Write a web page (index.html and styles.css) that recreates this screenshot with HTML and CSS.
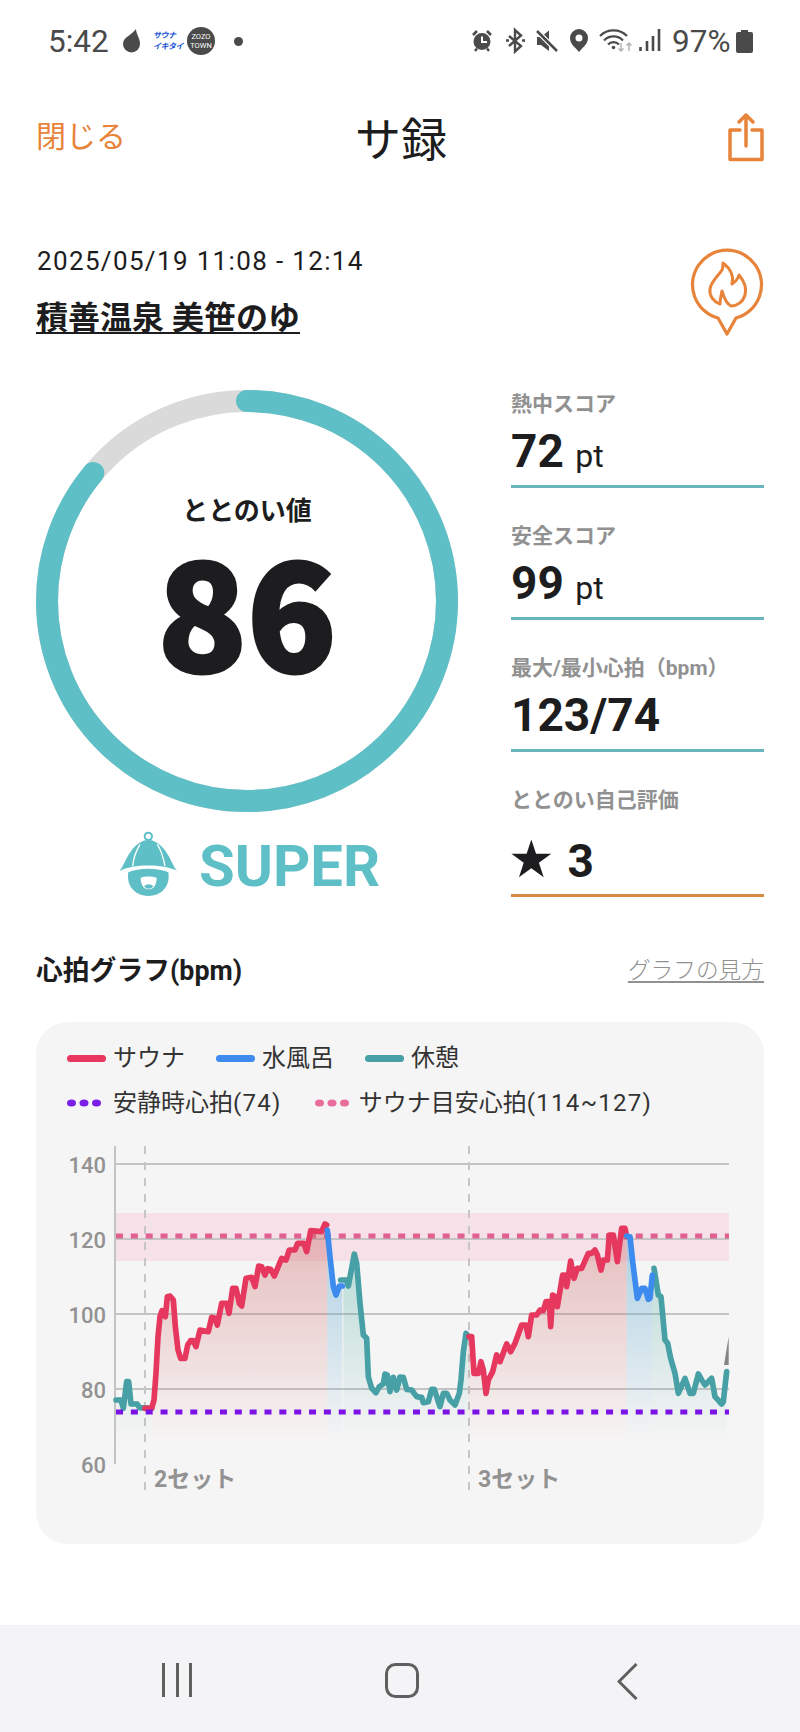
FILE: index.html
```html
<!DOCTYPE html>
<html lang="ja">
<head>
<meta charset="utf-8">
<title>サ録</title>
<link rel="stylesheet" href="styles.css">
</head>
<body>
<div class="page">
  <div class="status">
    <div class="status-left">
      <span class="clock">5:42</span>
      <svg class="st-drop" width="17" height="24" viewBox="123 31 17 24"><path d="M136 31C136 36 140 40 140 46A8.500 8.500 0 0 1 123 46C123 39 131 38 136 31Z"/></svg>
      <span class="st-logo"><span>サウナ</span><span>イキタイ</span></span>
      <span class="st-zozo"><span>ZOZO</span><span>TOWN</span></span>
      <span class="st-dot"></span>
    </div>
    <div class="status-right">
      <svg class="st-icons" width="190" height="28" viewBox="472 28 190 28">
        <circle cx="483" cy="42.500" r="8.500" fill="#4a4a4a"/>
        <path d="M483 37.500V43H488" fill="none" stroke="#fff" stroke-width="2"/>
        <path d="M474 36L478 32M492 36L488 32M476 52L478 49.500M490 52L488 49.500" fill="none" stroke="#4a4a4a" stroke-width="2.500"/>
        <path d="M510 37L522 47L516 52.500V31L522 36.500L510 47" fill="none" stroke="#4a4a4a" stroke-width="2.400"/>
        <path d="M507 41.500H510M523 41.500H526" stroke="#4a4a4a" stroke-width="2.400"/>
        <path d="M538 38H542L550 31.500V52L542 46H538Z" fill="#4a4a4a"/>
        <path d="M538 32L558 52" stroke="#fff" stroke-width="5"/>
        <path d="M538 32L558 52" stroke="#4a4a4a" stroke-width="2.500"/>
        <path d="M580 30A9 9 0 0 1 589 39C589 45 584 48 580 53C576 48 571 45 571 39A9 9 0 0 1 580 30Z" fill="#4a4a4a"/>
        <circle cx="580" cy="39" r="3.500" fill="#fff"/>
        <path d="M601 37A19 19 0 0 1 628 37M605 41.500A13 13 0 0 1 624 41.500M609 45.500A7.500 7.500 0 0 1 620 45.500" fill="none" stroke="#4a4a4a" stroke-width="2.200"/>
        <circle cx="614.500" cy="48.500" r="1.800" fill="#4a4a4a"/>
        <path d="M622 44V52M619.500 49.500L622 52L624.500 49.500M630 52V44M627.500 46.500L630 44L632.500 46.500" fill="none" stroke="#b5b5b5" stroke-width="1.500"/>
        <path d="M641.500 52V48M648 52V42M654 52V37M660 52V30" stroke="#4a4a4a" stroke-width="2.600"/>
      </svg>
      <span class="battery-text">97%</span>
      <svg class="st-battery" width="17" height="23" viewBox="0 0 17 23"><path d="M5 0H12V2H15A2 2 0 0 1 17 4V21A2 2 0 0 1 15 23H2A2 2 0 0 1 0 21V4A2 2 0 0 1 2 2H5Z"/></svg>
    </div>
  </div>

  <header class="topbar">
    <span class="close">閉じる</span>
    <h1 class="title">サ録</h1>
    <svg class="share" width="40" height="54" viewBox="727 110 40 54"><path d="M741 130H731V159.500H763V130H753M747 146V115M740 122L747 115L754 122" fill="none" stroke="#e8833a" stroke-width="3.500" stroke-linejoin="round" stroke-linecap="round"/></svg>
  </header>

  <section class="info">
    <div class="info-text">
      <div class="date">2025/05/19 11:08 - 12:14</div>
      <div class="venue">積善温泉 美笹のゆ</div>
    </div>
    <svg class="badge" width="76" height="90" viewBox="689 248 76 90">
      <path d="M718 318A34.500 34.500 0 1 1 736 318L727 334Z" fill="none" stroke="#e8833a" stroke-width="3.200" stroke-linejoin="round"/>
      <path d="M723 263C731 269 734 277 732 284C735 282 738 279 739 275C744 281 747 288 745 295C743 302 737 306 731 306C727 304 724 298 722 291C721 296 720 300 720 304C714 302 709 296 710 289C711 281 719 275 722 270C723 268 723 265 723 263Z" fill="none" stroke="#e8833a" stroke-width="3" stroke-linejoin="round"/>
    </svg>
  </section>

  <section class="main">
    <div class="score">
      <div class="gauge">
        <svg class="gauge-ring" width="422" height="422" viewBox="0 0 422 422">
          <circle cx="211" cy="211" r="200" fill="none" stroke="#dadada" stroke-width="22"/>
          <circle cx="211" cy="211" r="200" fill="none" stroke="#5fbfc6" stroke-width="22" stroke-linecap="round" stroke-dasharray="1081 1257" transform="rotate(-90 211 211)"/>
        </svg>
        <div class="gauge-center">
          <div class="gauge-label">ととのい値</div>
          <div class="gauge-value">86</div>
        </div>
      </div>
      <div class="rank">
        <svg class="rank-icon" width="58" height="65" viewBox="58 60 172 195">
          <circle cx="145" cy="76" r="11" fill="none" stroke="#5fbfc6" stroke-width="6"/>
          <path d="M58 180C75 165 85 105 135 88H155C205 105 215 165 232 180C190 158 100 158 58 180Z" fill="#5fbfc6"/>
          <path d="M120 100C108 120 100 145 98 165M172 100C185 120 190 140 195 165" fill="none" stroke="#fff" stroke-width="4"/>
          <path d="M85 184C115 170 175 170 205 184C212 230 180 255 145 255C110 255 78 230 85 184Z" fill="#5fbfc6"/>
          <path d="M122 200C135 195 155 195 170 200C170 225 158 235 146 235C134 235 122 225 122 200Z" fill="#fff"/>
          <path d="M132 226C140 218 152 218 160 226C152 236 140 236 132 226Z" fill="#5fbfc6"/>
        </svg>
        <span class="rank-text">SUPER</span>
      </div>
    </div>
    <div class="stats">
      <div class="stat">
        <div class="stat-label">熱中スコア</div>
        <div class="stat-value">72 <span class="unit">pt</span></div>
      </div>
      <div class="stat">
        <div class="stat-label">安全スコア</div>
        <div class="stat-value">99 <span class="unit">pt</span></div>
      </div>
      <div class="stat">
        <div class="stat-label">最大/最小心拍（bpm）</div>
        <div class="stat-value">123/74</div>
      </div>
      <div class="stat stat-self">
        <div class="stat-label">ととのい自己評価</div>
        <div class="stat-value"><span class="star">★</span> 3</div>
      </div>
    </div>
  </section>

  <div class="graph-head">
    <h2 class="graph-title">心拍グラフ(bpm)</h2>
    <span class="graph-link">グラフの見方</span>
  </div>

  <section class="card">
    <div class="legend">
      <div class="legend-row legend-row-lines">
        <span class="legend-item"><i class="swatch swatch-sauna"></i>サウナ</span>
        <span class="legend-item"><i class="swatch swatch-water"></i>水風呂</span>
        <span class="legend-item"><i class="swatch swatch-rest"></i>休憩</span>
      </div>
      <div class="legend-row legend-row-dots">
        <span class="legend-item"><svg class="dots" width="34" height="8" viewBox="0 0 34 8" fill="#7b1fe8"><ellipse cx="4.500" cy="4" rx="4.500" ry="3.500"/><ellipse cx="17" cy="4" rx="4.500" ry="3.500"/><ellipse cx="29.500" cy="4" rx="4.500" ry="3.500"/></svg>安静時心拍<span class="num">(74)</span></span>
        <span class="legend-item"><svg class="dots dots-pink" width="34" height="8" viewBox="0 0 34 8" fill="#e86d9c"><ellipse cx="4.500" cy="4" rx="4.500" ry="3.500"/><ellipse cx="17" cy="4" rx="4.500" ry="3.500"/><ellipse cx="29.500" cy="4" rx="4.500" ry="3.500"/></svg>サウナ目安心拍<span class="num">(114~127)</span></span>
      </div>
    </div>
    <svg class="chart" width="727" height="370" viewBox="36 1130 727 370">
      <defs>
        <linearGradient id="gr" gradientUnits="userSpaceOnUse" x1="0" y1="130" x2="0" y2="790"><stop offset="0" stop-color="#cc6a6a" stop-opacity=".42"/><stop offset="1" stop-color="#cc6a6a" stop-opacity="0"/></linearGradient>
        <linearGradient id="gb" gradientUnits="userSpaceOnUse" x1="0" y1="130" x2="0" y2="790"><stop offset="0" stop-color="#5aa8d0" stop-opacity=".5"/><stop offset="1" stop-color="#5aa8d0" stop-opacity="0"/></linearGradient>
        <linearGradient id="gt" gradientUnits="userSpaceOnUse" x1="0" y1="130" x2="0" y2="790"><stop offset="0" stop-color="#3fa69a" stop-opacity=".38"/><stop offset="1" stop-color="#3fa69a" stop-opacity="0"/></linearGradient>
      </defs>
      <rect class="band" x="115" y="1213" width="614" height="48"/>
      <path class="grid" d="M115 1164H729M115 1239H729M115 1314H729M115 1389H729"/>
      <path class="axis" d="M115 1146V1464"/>
      <path class="setline" d="M145 1146V1490M469 1146V1490"/>
      <path class="dot-pink" d="M116 1236H729"/>
      <g class="axis-label">
        <text x="106" y="1173">140</text>
        <text x="106" y="1248">120</text>
        <text x="106" y="1323">100</text>
        <text x="106" y="1398">80</text>
        <text x="106" y="1473">60</text>
      </g>
      <text class="set-label" x="154" y="1487">2セット</text>
      <text class="set-label" x="478" y="1487">3セット</text>

      <g transform="translate(20 1180) scale(.33333)">
        <polygon fill="url(#gt)" points="288,790 288,660 303,660 310,685 320,605 326,605 333,672 352,672 358,683 395,685 395,790"/>
        <polygon fill="url(#gr)" points="395,790 395,685 402,660 408,580 414,470 420,410 426,392 436,410 442,350 450,348 460,360 466,440 474,510 482,535 495,535 503,495 512,482 520,482 528,500 540,450 565,455 575,412 585,415 592,435 605,370 620,370 627,400 638,325 648,325 658,370 665,378 678,295 695,292 705,320 716,258 725,260 735,285 743,266 752,268 763,288 785,235 798,240 808,210 825,210 833,190 852,190 860,215 872,152 905,155 915,132 922,135 922,790"/>
        <polygon fill="url(#gb)" points="922,790 922,150 930,230 940,320 948,345 958,318 967,318 967,790"/>
        <polygon fill="url(#gt)" points="970,790 970,300 980,300 985,318 1003,222 1010,250 1020,370 1030,465 1040,475 1045,590 1055,625 1068,638 1078,620 1090,612 1095,582 1102,585 1110,635 1120,592 1130,630 1140,592 1140,790"/>
        <polyline class="ln ln-rest" points="288,660 303,660 310,685 320,605 326,605 333,672 352,672 358,683 395,685"/>
        <polyline class="ln ln-sauna" points="375,685 395,685 402,660 408,580 414,470 420,410 426,392 436,410 442,350 450,348 460,360 466,440 474,510 482,535 495,535 503,495 512,482 520,482 528,500 540,450 565,455 575,412 585,415 592,435 605,370 620,370 627,400 638,325 648,325 658,370 665,378 678,295 695,292 705,320 716,258 725,260 735,285 743,266 752,268 763,288 785,235 798,240 808,210 825,210 833,190 852,190 860,215 872,152 905,155 915,132 920,135"/>
        <polyline class="ln ln-rest" points="962,300 980,300 985,318 1003,222 1010,250 1020,370 1030,465 1040,475 1045,590 1055,625 1068,638 1078,620 1090,612 1095,582 1102,585 1110,635 1120,592 1130,630 1140,592"/>
        <polyline class="ln ln-water" points="922,150 930,230 940,320 948,345 958,318 967,318"/>
      </g>
      <g transform="translate(400 1180) scale(.33333)">
        <polygon fill="url(#gt)" points="0,790 0,592 10,592 20,628 35,630 50,650 65,652 70,668 85,665 95,628 103,628 120,680 130,640 140,640 150,660 165,675 178,640 183,600 190,515 198,460 205,470 205,790"/>
        <polygon fill="url(#gr)" points="205,790 205,470 215,470 222,580 235,580 243,545 250,570 258,640 265,600 278,575 290,525 300,545 320,492 332,515 345,490 365,435 378,435 385,470 395,405 410,405 420,390 430,392 438,365 448,365 452,440 458,345 465,350 472,380 488,285 495,285 500,320 512,243 522,295 532,265 545,265 565,220 575,220 585,210 592,225 603,270 610,240 622,240 628,165 640,165 652,245 665,145 675,145 680,170 680,790"/>
        <polygon fill="url(#gb)" points="680,790 680,168 690,170 698,245 712,355 725,325 735,325 745,358 750,355 757,285 757,790"/>
        <polygon fill="url(#gt)" points="757,790 757,285 762,265 775,345 783,350 795,480 803,490 812,535 825,580 835,640 855,595 870,640 880,640 895,582 905,600 915,615 935,595 945,650 965,672 970,665 980,575 980,790"/>
        <polyline class="ln ln-rest" points="0,592 10,592 20,628 35,630 50,650 65,652 70,668 85,665 95,628 103,628 120,680 130,640 140,640 150,660 165,675 178,640 183,600 190,515 198,460 205,470"/>
        <polyline class="ln ln-sauna" points="207,470 215,470 222,580 235,580 243,545 250,570 258,640 265,600 278,575 290,525 300,545 320,492 332,515 345,490 365,435 378,435 385,470 395,405 410,405 420,390 430,392 438,365 448,365 452,440 458,345 465,350 472,380 488,285 495,285 500,320 512,243 522,295 532,265 545,265 565,220 575,220 585,210 592,225 603,270 610,240 622,240 628,165 640,165 652,245 665,145 675,145 680,170"/>
        <polyline class="ln ln-rest" points="762,265 775,345 783,350 795,480 803,490 812,535 825,580 835,640 855,595 870,640 880,640 895,582 905,600 915,615 935,595 945,650 965,672 970,665 980,575"/>
        <polyline class="ln ln-water" points="680,168 690,170 698,245 712,355 725,325 735,325 745,358 750,355 757,285"/>
        <polygon fill="#858585" points="972,555 986,555 986,470"/>
      </g>
      <path class="dot-purple" d="M116 1412H729"/>
    </svg>
  </section>

  <nav class="navbar">
    <svg width="30" height="34" viewBox="0 0 30 34" class="nav-icon"><path d="M1.500 0V34M15.500 0V34M28.500 0V34"/></svg>
    <svg width="35" height="35" viewBox="0 0 35 35" class="nav-icon"><rect x="1.500" y="1.500" width="31" height="32" rx="9"/></svg>
    <svg width="21" height="37" viewBox="0 0 21 37" class="nav-icon"><path d="M19.500 1L2 18.500L19.500 36" stroke-linejoin="miter"/></svg>
  </nav>
</div>
</body>
</html>
```

FILE: styles.css
```css
* { box-sizing: border-box; }
html, body { margin: 0; padding: 0; background: #fff; }
body { font-family: Roboto, "Noto Sans CJK JP", sans-serif; color: #1d1d20; }
h1, h2 { margin: 0; font-weight: inherit; font-size: inherit; }

.page { width: 800px; height: 1732px; display: flex; flex-direction: column; overflow: hidden; }

.status { height: 82px; flex: none; display: flex; justify-content: space-between; align-items: center; padding: 0 47px 0 48px; color: #4a4a4a; }
.status-left, .status-right { display: flex; align-items: center; }
.clock { font-size: 31.500px; width: 59px; padding-top: 1px; white-space: nowrap; }
.st-drop { margin-left: 16px; fill: #4a4a4a; }
.st-logo { margin-left: 13px; width: 29px; display: flex; flex-direction: column; font-size: 8px; line-height: 11px; font-weight: 700; font-style: italic; letter-spacing: -.5px; color: #1a55d8; white-space: nowrap; }
.st-zozo { margin-left: 5px; width: 28px; height: 28px; border-radius: 50%; background: #4a4a4a; color: #fff; display: flex; flex-direction: column; align-items: center; justify-content: center; font-size: 7.500px; line-height: 9px; }
.st-dot { margin-left: 19px; width: 9px; height: 9px; border-radius: 50%; background: #4a4a4a; }
.st-icons { margin-right: 11px; }
.battery-text { font-size: 31.500px; width: 59px; padding-top: 1px; white-space: nowrap; }
.st-battery { margin-left: 5px; fill: #4a4a4a; }

.topbar { height: 110px; flex: none; display: grid; grid-template-columns: 1fr auto 1fr; align-items: center; padding: 0 34px 0 36px; }
.close { font-size: 30px; line-height: 40px; color: #e8833a; }
.title { font-size: 46px; line-height: 56px; color: #1d1d20; padding-top: 5px; }
.share { justify-self: end; }

.info { display: flex; justify-content: space-between; align-items: flex-start; margin-top: 54px; padding: 0 35px 0 37px; height: 90px; }
.date { font-size: 26px; line-height: 30px; letter-spacing: 1.350px; }
.venue { font-size: 32px; line-height: 40px; margin-top: 22px; margin-left: -1px; font-weight: 700; text-decoration: underline; text-decoration-thickness: 2px; text-underline-offset: 3px; }
.badge { margin-top: 2px; }

.main { display: flex; justify-content: space-between; margin-top: 53px; padding: 0 36px; height: 509px; }
.score { width: 422px; display: flex; flex-direction: column; padding-top: 1px; }
.gauge { display: grid; width: 422px; height: 422px; }
.gauge-ring, .gauge-center { grid-area: 1 / 1; }
.gauge-center { display: flex; flex-direction: column; align-items: center; padding-top: 103px; }
.gauge-label { font-size: 26px; line-height: 36px; font-weight: 700; }
.gauge-value { font-family: "Noto Sans CJK JP", sans-serif; font-size: 147px; line-height: 150px; font-weight: 900; margin-top: 4px; -webkit-text-stroke: 3px #1d1d20; }
.rank { display: flex; align-items: center; margin-top: 15px; padding-left: 83px; }
.rank-text { margin-left: 22px; font-size: 58px; line-height: 66px; font-weight: 700; color: #5fbfc6; padding-top: 6px; }

.stats { width: 253px; display: flex; flex-direction: column; gap: 34px; padding-top: 1px; }
.stat { height: 98px; border-bottom: 3px solid #6ab5bb; }
.stat-self { height: 111px; border-bottom-color: #d68a45; }
.stat-label { font-size: 21px; line-height: 28px; font-weight: 700; color: #919191; white-space: nowrap; }
.stat-value { font-size: 46px; line-height: 54px; font-weight: 700; margin-top: 6px; white-space: nowrap; }
.unit { font-size: 32px; font-weight: 400; }
.stat-self .stat-value { margin-top: 19px; }
.star { font-family: "DejaVu Sans", sans-serif; font-size: 52px; line-height: 1; margin-left: -3px; margin-right: 1.500px; }

.graph-head { display: flex; justify-content: space-between; align-items: center; margin-top: 53px; padding: 0 36px 0 36px; height: 34px; }
.graph-title { font-size: 26.800px; font-weight: 700; }
.graph-link { font-size: 22.700px; color: #919191; font-weight: 300; text-decoration: underline; text-underline-offset: 3px; }

.card { margin: 37px 36px 0; height: 522px; border-radius: 32px; background: #f6f5f5; padding-top: 21px; }
.legend { display: flex; flex-direction: column; gap: 15px; padding-left: 31px; }
.legend-row { display: flex; height: 30px; }
.legend-row-lines { gap: 31px; }
.legend-row-dots { gap: 33px; }
.legend-item { display: flex; align-items: center; font-size: 24px; line-height: 30px; color: #333; white-space: nowrap; }
.num { letter-spacing: 1.300px; }
.swatch { display: block; width: 39px; height: 7px; border-radius: 4px; margin-right: 7px; }
.swatch-sauna { background: #e8365e; }
.swatch-water { background: #3d8bef; }
.swatch-rest { background: #46a0a5; }
.dots { margin-right: 12px; }
.dots-pink { margin-right: 10px; }
.chart { display: block; margin-top: 12px; }

.band { fill: #f5e1e7; }
.grid { stroke: #c4c4c4; stroke-width: 2; fill: none; }
.axis { stroke: #c4c4c4; stroke-width: 2; fill: none; }
.setline { stroke: #c6c6c6; stroke-width: 2; stroke-dasharray: 8 8; fill: none; }
.dot-pink { stroke: #e0608f; stroke-width: 5; stroke-dasharray: 7 7.850; fill: none; }
.dot-purple { stroke: #7b12e6; stroke-width: 5; stroke-dasharray: 7 7.850; fill: none; }
.axis-label text { font-size: 22px; font-weight: 500; fill: #929292; text-anchor: end; }
.set-label { font-size: 23px; font-weight: 700; fill: #929292; }
.ln { fill: none; stroke-width: 17; stroke-linejoin: round; stroke-linecap: round; }
.ln-sauna { stroke: #e6375f; }
.ln-water { stroke: #3d8bef; }
.ln-rest { stroke: #46a0a5; }

.navbar { margin-top: auto; height: 107px; flex: none; background: #f4f4f6; display: flex; align-items: flex-start; padding-top: 38px; }
.nav-icon { fill: none; stroke: #5f5f5f; stroke-width: 3; }
.nav-icon:nth-child(1) { margin-left: 162px; }
.nav-icon:nth-child(2) { margin-left: 193px; }
.nav-icon:nth-child(3) { margin-left: 197px; }
```
